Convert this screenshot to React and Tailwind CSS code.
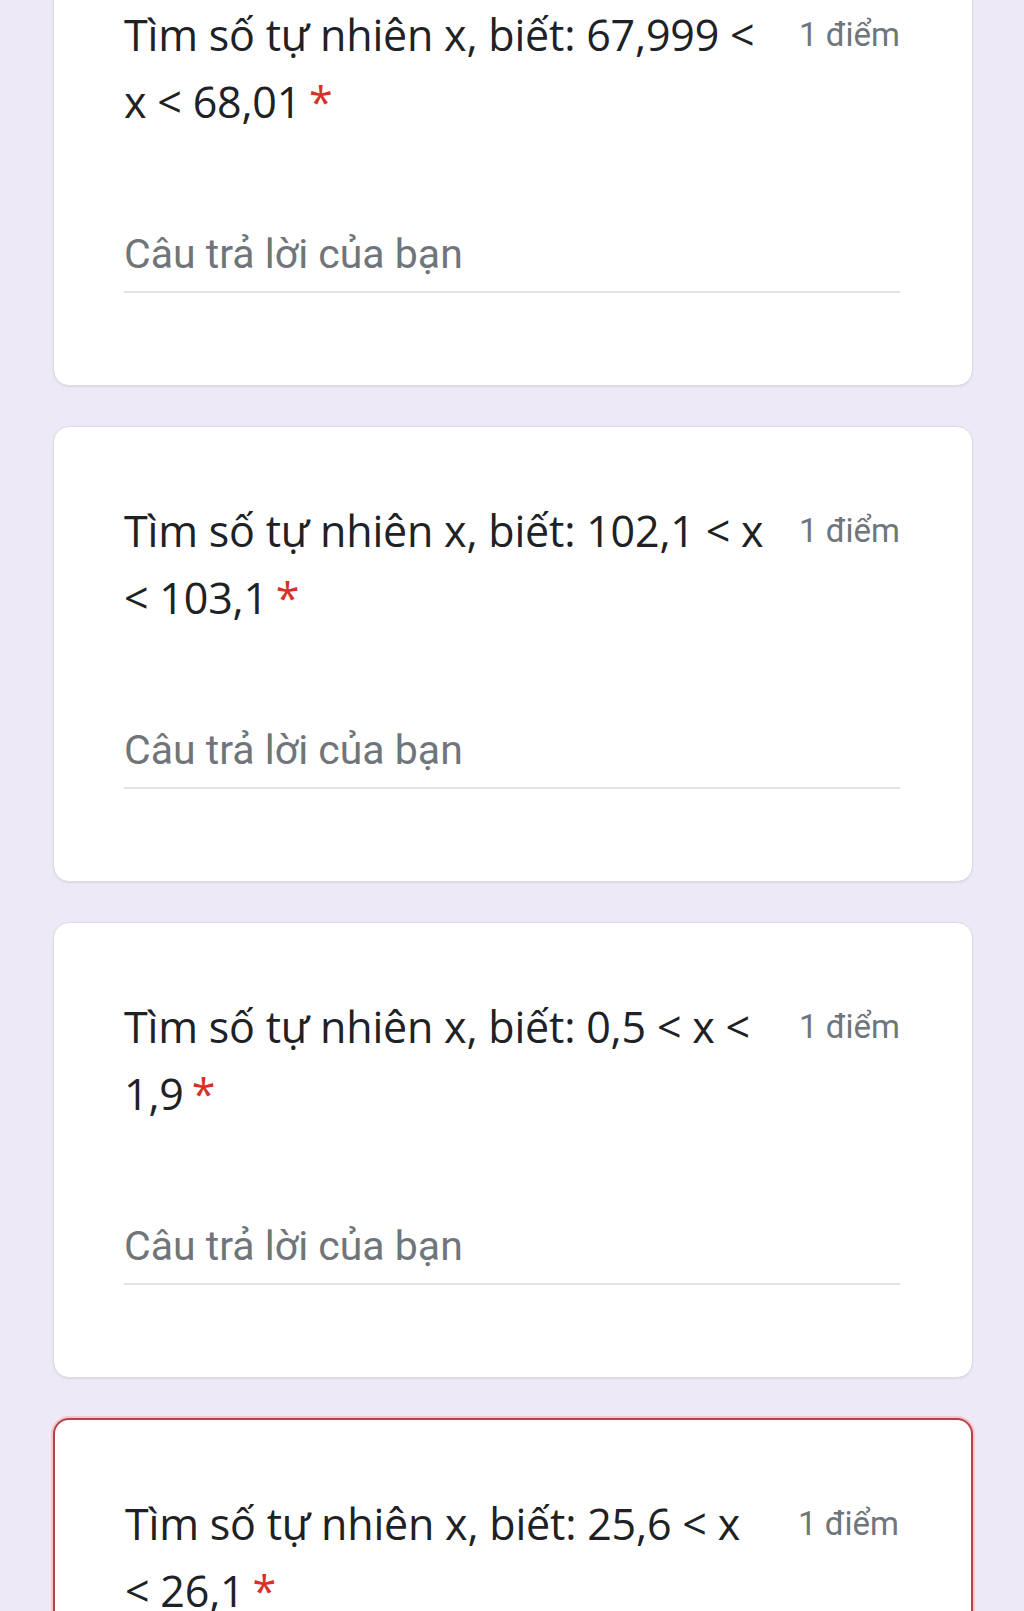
import React from "react";

const questions = [
  { l1: "Tìm số tự nhiên x, biết: 67,999 <", l2: "x < 68,01", error: false },
  { l1: "Tìm số tự nhiên x, biết: 102,1 < x", l2: "< 103,1", error: false },
  { l1: "Tìm số tự nhiên x, biết: 0,5 < x <", l2: "1,9", error: false },
  { l1: "Tìm số tự nhiên x, biết: 25,6 < x", l2: "< 26,1", error: true },
];

function Card({ q }) {
  return (
    <div
      className={
        "bg-white rounded-[16px] pl-[70px] pr-[72px] pt-[70px] pb-[92px] " +
        (q.error
          ? "border-2 border-[#b3424a] shadow-[0_0_0_2px_#f6c7c9]"
          : "border border-[#dcdae3] shadow-[0_1px_2px_rgba(0,0,0,0.08)]")
      }
    >
      <div className="flex items-start justify-between">
        <div
          className="text-[#202124] text-[43px] leading-[67px] tracking-[-0.2px]"
          style={{ fontFamily: '"Open Sans", sans-serif' }}
        >
          <div>{q.l1}</div>
          <div>
            {q.l2}
            <span className="text-[#d93025] ml-[8px]">*</span>
          </div>
        </div>
        <div
          className="text-[#70757a] text-[33px] leading-[67px] whitespace-nowrap"
          style={{ fontFamily: 'Roboto, sans-serif' }}
        >
          1 điểm
        </div>
      </div>
      <div className="mt-[92px] border-b-2 border-[#e3e3e3] pb-[10px]">
        <div
          className="text-[#70757a] text-[41px] leading-[54px]"
          style={{ fontFamily: 'Roboto, sans-serif' }}
        >
          Câu trả lời của bạn
        </div>
      </div>
    </div>
  );
}

export default function App() {
  return (
    <div className="bg-[#ede9f6] min-h-screen overflow-hidden">
      <div className="mt-[-70px] pl-[53px] pr-[51px] flex flex-col gap-[40px]">
        {questions.map((q, i) => (
          <Card key={i} q={q} />
        ))}
      </div>
    </div>
  );
}
